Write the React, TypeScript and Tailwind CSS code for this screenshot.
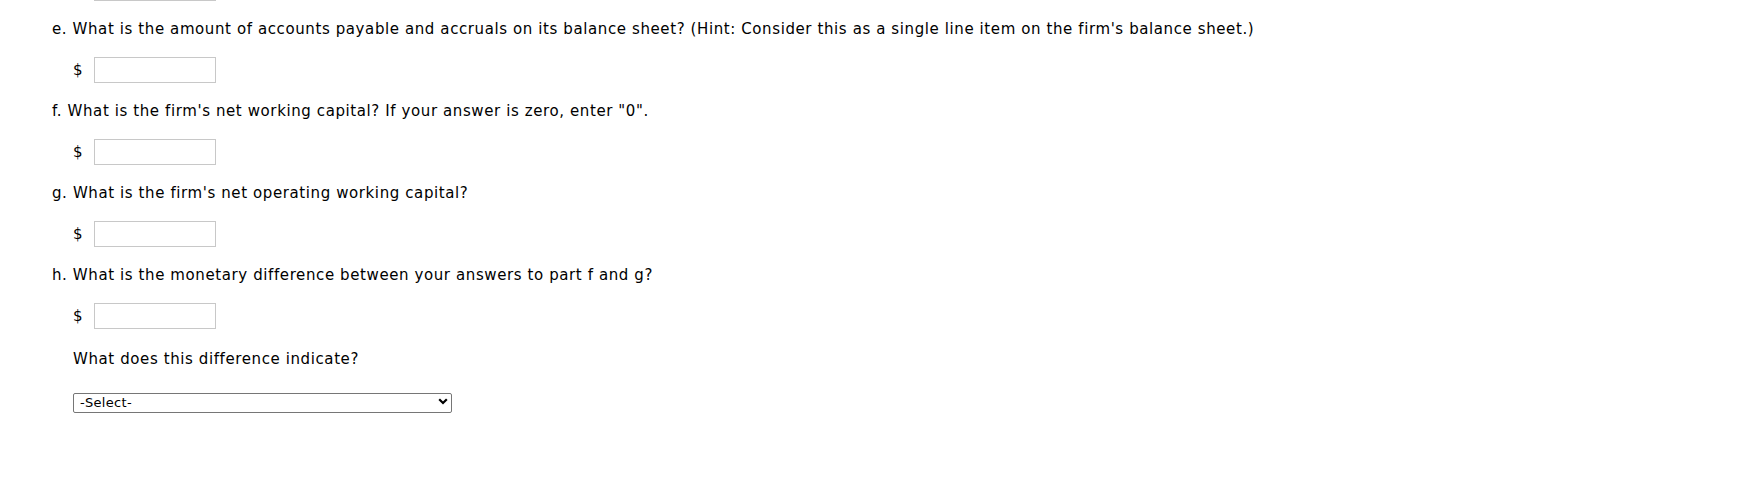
import React from "react";

const items = [
  {
    label: "e.",
    text: "What is the amount of accounts payable and accruals on its balance sheet? (Hint: Consider this as a single line item on the firm's balance sheet.)",
  },
  { label: "f.", text: 'What is the firm\'s net working capital? If your answer is zero, enter "0".' },
  { label: "g.", text: "What is the firm's net operating working capital?" },
  { label: "h.", text: "What is the monetary difference between your answers to part f and g?" },
];

function MoneyInput({ className = "", sign = true }: { className?: string; sign?: boolean }) {
  return (
    <div className={`flex items-center pl-[21px] ${className}`}>
      <span className="w-[21px] leading-[20px]">{sign ? "$" : ""}</span>
      <input type="text" className="h-[26px] w-[122px] border border-[#c8c8c8] bg-white outline-none" />
    </div>
  );
}

export default function App() {
  return (
    <div className="h-[493px] w-full overflow-hidden bg-white font-['DejaVu_Sans','Verdana',sans-serif] text-[15px] tracking-[0.6px] text-black">
      <div className="pl-[52px]">
        {/* bottom edge of the previous answer box, scrolled off the top */}
        <MoneyInput className="-mt-[25px]" sign={false} />
        {items.map((it) => (
          <div key={it.label} className="mt-[18px]">
            <p className="leading-[20px] whitespace-nowrap">
              {it.label} {it.text}
            </p>
            <MoneyInput className="mt-[18px]" />
          </div>
        ))}
        <div className="pl-[21px]">
          <p className="mt-[20px] leading-[20px]">What does this difference indicate?</p>
          <div className="relative mt-[22px] w-[379px]">
            <select className="h-[20px] w-full appearance-none rounded-[2px] border border-[#767676] bg-white pl-[6px] text-[13px] leading-[18px] tracking-[0.3px] text-black outline-none">
              <option>-Select-</option>
            </select>
            <svg
              className="pointer-events-none absolute right-[4px] top-[7px]"
              width="10"
              height="7"
              viewBox="0 0 10 7"
              fill="none"
            >
              <path d="M1.2 1.2 L5 5 L8.8 1.2" stroke="#000" strokeWidth="2.2" />
            </svg>
          </div>
        </div>
      </div>
    </div>
  );
}
